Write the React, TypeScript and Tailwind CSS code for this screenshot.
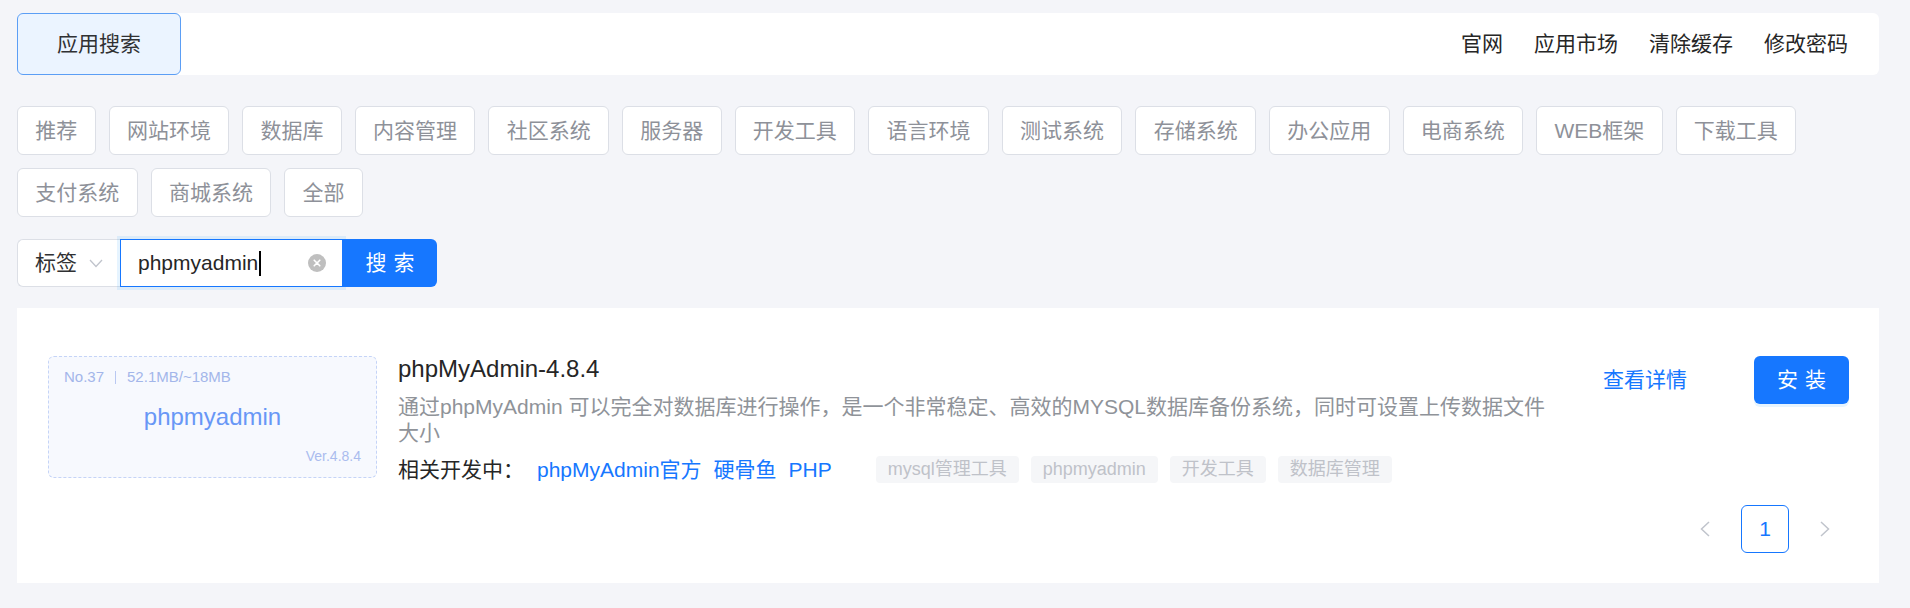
import React from "react";

const categories = [
  "推荐", "网站环境", "数据库", "内容管理", "社区系统", "服务器", "开发工具", "语言环境",
  "测试系统", "存储系统", "办公应用", "电商系统", "WEB框架", "下载工具", "支付系统", "商城系统", "全部",
];

const tags = ["mysql管理工具", "phpmyadmin", "开发工具", "数据库管理"];

export default function App() {
  return (
    <div className="min-h-[608px] w-full bg-[#f4f5f9] pl-[17px] pr-[31px] pt-[13px] pb-[25px] font-['Liberation_Sans','Noto_Sans_CJK_SC',sans-serif] text-[#303133]">
      {/* Header */}
      <div className="flex h-[62px] items-center justify-between rounded-[6px] bg-white">
        <button className="flex h-full w-[164px] items-center justify-center rounded-[6px] border border-[#5b9ef5] bg-[#ebf4ff] text-[21px] text-[#303133]">
          应用搜索
        </button>
        <div className="flex items-center gap-[31px] pr-[31px] text-[21px] leading-[30px] text-[#262626]">
          <span>官网</span>
          <span>应用市场</span>
          <span>清除缓存</span>
          <span>修改密码</span>
        </div>
      </div>

      {/* Categories */}
      <div className="mt-[31px] flex flex-wrap gap-[13px]">
        {categories.map((c) => (
          <div
            key={c}
            className="flex h-[49px] items-center rounded-[6px] border border-[#dcdfe6] bg-white px-[17.3px] text-[21px] text-[#8e9199]"
          >
            {c}
          </div>
        ))}
      </div>

      {/* Search row */}
      <div className="mt-[22px] flex h-[48px] items-stretch">
        <div className="flex w-[103px] items-center rounded-l-[6px] border border-r-0 border-[#dcdfe6] bg-white pl-[17px] text-[21px] text-[#303133]">
          <span>标签</span>
          <svg className="ml-[12px]" width="14" height="9" viewBox="0 0 14 9" fill="none">
            <polyline points="1,1 7,7.5 13,1" stroke="#c0c4cc" strokeWidth="1.3" fill="none" />
          </svg>
        </div>
        <div className="relative z-10 flex w-[223px] items-center border border-[#1677ff] bg-white pl-[17px] pr-[16px] shadow-[0_0_0_3px_rgba(5,145,255,0.1)]">
          <span className="text-[21px] leading-[28px] text-[#262626]">phpmyadmin</span>
          <span className="ml-[1px] h-[25px] w-[2px] bg-black" />
          <svg className="ml-auto" width="18" height="18" viewBox="0 0 18 18">
            <circle cx="9" cy="9" r="9" fill="#bfbfbf" />
            <path d="M6.2 6.2 L11.8 11.8 M11.8 6.2 L6.2 11.8" stroke="#fff" strokeWidth="1.6" strokeLinecap="round" />
          </svg>
        </div>
        <button className="relative z-20 flex w-[94px] items-center justify-center rounded-r-[6px] bg-[#1677ff] text-[21px] text-white">
          <span className="mr-[-0.34em] tracking-[0.34em]">搜索</span>
        </button>
      </div>

      {/* Result card */}
      <div className="mt-[21px] bg-white pl-[31px] pr-[30px] pt-[48px] pb-[30px]">
        <div className="flex items-start">
          {/* Thumbnail */}
          <div className="flex h-[122px] w-[329px] shrink-0 flex-col rounded-[6px] border border-dashed border-[#c5d4f7] bg-[#f7f9fe] px-[15px] pt-[10px] pb-[12px]">
            <div className="flex h-[20px] items-center text-[15px] leading-[20px] text-[#a3b6ea]">
              <span>No.37</span>
              <span className="mx-[11px] h-[13px] w-[1px] bg-[#b9c8f2]" />
              <span>52.1MB/~18MB</span>
            </div>
            <div className="mt-[15px] h-[30px] text-center text-[24px] leading-[30px] text-[#6897f6]">phpmyadmin</div>
            <div className="mt-[15px] h-[18px] text-right text-[14px] leading-[18px] text-[#aabcee]">Ver.4.8.4</div>
          </div>

          {/* Middle */}
          <div className="ml-[21px] w-[1165px]">
            <div className="text-[24px] leading-[26px] text-[#262626]">phpMyAdmin-4.8.4</div>
            <div className="mt-[12px] text-[21px] leading-[26px] text-[#8f9399]">
              通过phpMyAdmin 可以完全对数据库进行操作，是一个非常稳定、高效的MYSQL数据库备份系统，同时可设置上传数据文件大小
            </div>
            <div className="mt-[10px] flex h-[27px] items-center">
              <span className="text-[21px] text-[#262626]">相关开发中：</span>
              <div className="ml-[13px] flex items-center gap-[12px] text-[21px] text-[#1677ff]">
                <span>phpMyAdmin官方</span>
                <span>硬骨鱼</span>
                <span>PHP</span>
              </div>
              <div className="ml-[44px] flex items-center gap-[12px]">
                {tags.map((t) => (
                  <span
                    key={t}
                    className="flex h-[27px] items-center rounded-[4px] bg-[#f5f6f8] px-[12px] text-[18px] text-[#bfc2c9]"
                  >
                    {t}
                  </span>
                ))}
              </div>
            </div>
          </div>

          {/* Actions */}
          <div className="ml-auto flex items-center gap-[67px]">
            <span className="text-[21px] text-[#1677ff]">查看详情</span>
            <button className="flex h-[48px] w-[95px] items-center justify-center rounded-[6px] bg-[#1677ff] text-[21px] text-white shadow-[0_3px_0_rgba(5,145,255,0.1)]">
              <span className="mr-[-0.34em] tracking-[0.34em]">安装</span>
            </button>
          </div>
        </div>

        {/* Pagination */}
        <div className="mt-[22px] flex justify-end gap-[12px]">
          <div className="flex h-[48px] w-[48px] items-center justify-center">
            <svg width="10" height="16" viewBox="0 0 10 16" fill="none">
              <polyline points="9,1 1.5,8 9,15" stroke="#c0c4cc" strokeWidth="1.5" fill="none" />
            </svg>
          </div>
          <div className="flex h-[48px] w-[48px] items-center justify-center rounded-[6px] border border-[#1677ff] text-[21px] text-[#1677ff]">
            1
          </div>
          <div className="flex h-[48px] w-[48px] items-center justify-center">
            <svg width="10" height="16" viewBox="0 0 10 16" fill="none">
              <polyline points="1,1 8.5,8 1,15" stroke="#c0c4cc" strokeWidth="1.5" fill="none" />
            </svg>
          </div>
        </div>
      </div>
    </div>
  );
}
